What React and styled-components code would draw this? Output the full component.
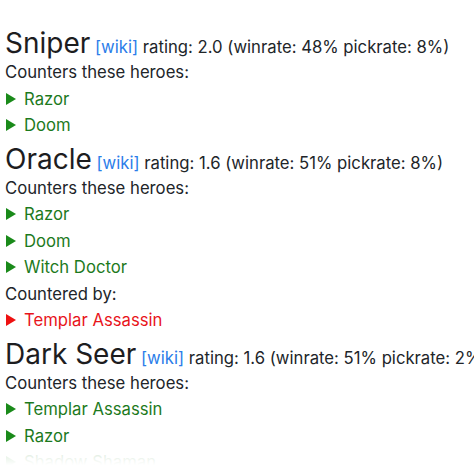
import styled, { createGlobalStyle } from "styled-components";

const Global = createGlobalStyle`
  html, body {
    margin: 0;
    padding: 0;
    background: #fff;
  }
  body {
    font-family: Inter, "Liberation Sans", Arial, sans-serif;
    color: #212529;
  }
`;

const heroes = [
  {
    name: "Sniper",
    rating: "2.0",
    winrate: "48%",
    pickrate: "8%",
    counters: ["Razor", "Doom"],
    counteredBy: [],
  },
  {
    name: "Oracle",
    rating: "1.6",
    winrate: "51%",
    pickrate: "8%",
    counters: ["Razor", "Doom", "Witch Doctor"],
    counteredBy: ["Templar Assassin"],
  },
  {
    name: "Dark Seer",
    rating: "1.6",
    winrate: "51%",
    pickrate: "2%",
    counters: ["Templar Assassin", "Razor", "Shadow Shaman"],
    counteredBy: [],
  },
];

const App = () => {
  return (
    <>
      <Global />
      <Page>
        {heroes.map((h) => (
          <Hero key={h.name}>
            <Title>
              <Name>{h.name}</Name> <Wiki href="#">[wiki]</Wiki> rating:{" "}
              {h.rating} (winrate: {h.winrate} pickrate: {h.pickrate})
            </Title>
            {h.counters.length > 0 && <Label>Counters these heroes:</Label>}
            {h.counters.map((c) => (
              <Item key={c} $bad={false}>
                {c}
              </Item>
            ))}
            {h.counteredBy.length > 0 && <Label>Countered by:</Label>}
            {h.counteredBy.map((c) => (
              <Item key={c} $bad>
                {c}
              </Item>
            ))}
          </Hero>
        ))}
        <Fade />
      </Page>
    </>
  );
};

export default App;

const Page = styled.div`
  position: relative;
  height: 474px;
  overflow: hidden;
  padding: 23px 5px 0;
  box-sizing: border-box;
`;

const Hero = styled.section`
  display: flex;
  flex-direction: column;
`;

const Title = styled.div`
  font-size: 16.7px;
  line-height: 26px;
  margin-top: 7px;
  margin-bottom: -1px;
  white-space: nowrap;
`;

const Name = styled.span`
  font-size: 28px;
  color: #1d1d1f;
`;

const Wiki = styled.a`
  color: #2b7de9;
  text-decoration: none;
`;

const Label = styled.div`
  font-size: 16.7px;
  line-height: 26.5px;
`;

const Item = styled.div`
  display: flex;
  align-items: center;
  gap: 8px;
  font-size: 16.7px;
  line-height: 26.5px;
  color: ${(p) => (p.$bad ? "#e8141b" : "#1d7a1d")};

  &::before {
    content: "";
    width: 0;
    height: 0;
    margin-left: 1px;
    border-top: 6px solid transparent;
    border-bottom: 6px solid transparent;
    border-left: 10.5px solid ${(p) => (p.$bad ? "#ee1111" : "#1a8a1a")};
  }
`;

const Fade = styled.div`
  position: absolute;
  left: 0;
  right: 0;
  bottom: 0;
  height: 22px;
  background: linear-gradient(to bottom, rgba(255, 255, 255, 0.85), #fff 60%);
`;
